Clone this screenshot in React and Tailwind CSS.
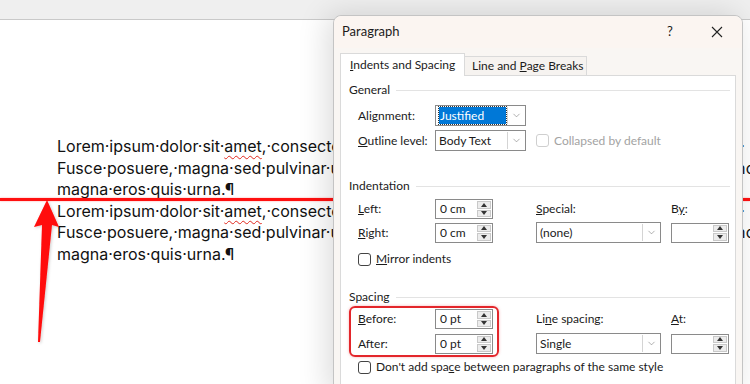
import { ChevronDown } from 'lucide-react'

const UI = "font-['Lato',sans-serif] text-[12px] text-[#1b1b1b] whitespace-nowrap"

const L1 = (
  <>
    Lorem·ipsum·dolor·sit·<span className="underline decoration-wavy decoration-[#e0261b] decoration-1 underline-offset-[3px]">amet</span>,·consectetur·adipiscing·elit.·Maecenas·porttitor·congue·massa.·
  </>
)
const L2 = 'Fusce·posuere,·magna·sed·pulvinar·ultricies,·purus·lectus·malesuada·libero,·sit·amet·commodo·'

function Spin() {
  return (
    <div className="flex flex-col w-[15px] h-full py-px pr-px gap-px">
      <div className="flex-1 flex items-center justify-center bg-[#ececec] border border-[#c9c9c9]">
        <div className="w-0 h-0 border-l-[3px] border-r-[3px] border-b-[4px] border-l-transparent border-r-transparent border-b-[#333]" />
      </div>
      <div className="flex-1 flex items-center justify-center bg-[#ececec] border border-[#c9c9c9]">
        <div className="w-0 h-0 border-l-[3px] border-r-[3px] border-t-[4px] border-l-transparent border-r-transparent border-t-[#333]" />
      </div>
    </div>
  )
}

function SpinBox({ value, w = 'w-[58px]' }) {
  return (
    <div className={`${w} h-[20px] flex items-center border border-[#8a8a8a] bg-white`}>
      <span className="flex-1 pl-[4px] leading-none">{value}</span>
      <Spin />
    </div>
  )
}

function Select({ children, w }) {
  return (
    <div className={`${w} h-[21px] flex items-stretch border border-[#8a8a8a] bg-white`}>
      <div className="flex-1 flex items-center pl-[3px] pr-px">{children}</div>
      <div className="w-[17px] flex items-center justify-center border-l border-[#d4d4d4] my-px mr-px">
        <ChevronDown size={11} strokeWidth={1.2} className="text-[#707070]" />
      </div>
    </div>
  )
}

function Section({ title }) {
  return (
    <div className="h-[16px] flex items-center gap-[6px] pr-[5px]">
      <span>{title}</span>
      <div className="flex-1 h-px bg-[#e3e3e3]" />
    </div>
  )
}

function Check({ light, children }) {
  return (
    <div className="flex items-center gap-[5px]">
      <div className={`w-[13px] h-[13px] rounded-[3px] border bg-white ${light ? 'border-[#cfcfcf]' : 'border-[#444]'}`} />
      <span className={light ? 'text-[#a3a3a3]' : ''}>{children}</span>
    </div>
  )
}

export default function App() {
  return (
    <div className="relative w-[750px] h-[384px] overflow-hidden bg-white">
      {/* ribbon strip */}
      <div className="h-[20px] bg-[#efefef] border-b border-[#c9c9c9]" />

      {/* document page */}
      <div className="pl-[57px] pt-[116px] font-['Inter',sans-serif] text-[16px] leading-[21.6px] text-[#111] whitespace-nowrap">
        <div>{L1}</div>
        <div>{L2}</div>
        <div>magna·eros·quis·urna.¶</div>
        <div>{L1}</div>
        <div>{L2}</div>
        <div>magna·eros·quis·urna.¶</div>
      </div>

      {/* red annotation line */}
      <div className="absolute left-0 top-[198px] w-[750px] h-[3px] bg-[#ff1010] shadow-[0_0_2px_rgba(255,0,0,0.4)]" />

      {/* red arrow */}
      <svg className="absolute left-0 top-0" width="80" height="384" viewBox="0 0 80 384">
        <defs>
          <filter id="sh" x="-50%" y="-10%" width="200%" height="120%">
            <feDropShadow dx="1" dy="1" stdDeviation="1.5" floodColor="#000" floodOpacity="0.2" />
          </filter>
        </defs>
        <polygon
          points="47,200 59,227 52,225 40,342 38,342 42,225 34,227"
          fill="#ff0a0a"
          filter="url(#sh)"
        />
      </svg>

      {/* Paragraph dialog */}
      <div className={`absolute left-[333px] top-[15px] w-[410px] h-[380px] rounded-t-[8px] border border-[#c4c4c4] bg-[#f9f6f3] shadow-[-6px_0_30px_rgba(0,0,0,0.14)] ${UI}`}>
        <div className="h-[32px] flex items-center pl-[8px] pr-[16px] bg-[#fbf5f1] rounded-t-[8px]">
          <span className="flex-1 text-[13px]">Paragraph</span>
          <span className="w-[14px] text-[13px] mr-[30px]">?</span>
          <svg width="12" height="12" viewBox="0 0 12 12" className="mr-[3px]">
            <path d="M1 1L11 11M11 1L1 11" stroke="#222" strokeWidth="1.1" />
          </svg>
        </div>

        <div className="mt-[5px] pl-[6px]">
          {/* tabs */}
          <div className="flex items-end h-[23px]">
            <div className="relative z-10 w-[125px] h-[23px] pl-[9px] flex items-center bg-white border border-b-0 border-[#dadada]">
              <span><u>I</u>ndents and Spacing</span>
            </div>
            <div className="w-[122px] h-[20px] pl-[7px] flex items-center border border-l-0 border-[#dadada] bg-[#f6f3f0]">
              <span>Line and <u>P</u>age Breaks</span>
            </div>
          </div>

          {/* panel */}
          <div className="-mt-px w-[396px] h-[330px] bg-white border border-[#dadada] pl-[8px] pt-[6px]">
            <Section title="General" />

            <div className="mt-[7px] ml-[9px] flex items-center h-[21px]">
              <span className="w-[77px]">Ali<u>g</u>nment:</span>
              <Select w="w-[91px]">
                <span className="h-[17px] px-px flex items-center bg-[#0078d7] text-white outline-1 outline-dotted outline-[#333] w-full">Justified</span>
              </Select>
            </div>

            <div className="mt-[4px] ml-[9px] flex items-center h-[21px]">
              <span className="w-[77px]"><u>O</u>utline level:</span>
              <Select w="w-[91px]">Body Text</Select>
              <div className="ml-[10px]">
                <Check light>Collapsed by default</Check>
              </div>
            </div>

            <div className="mt-[27px]">
              <Section title="Indentation" />
            </div>

            <div className="mt-[5px] ml-[9px] flex items-center h-[20px]">
              <span className="w-[77px]"><u>L</u>eft:</span>
              <SpinBox value="0 cm" />
              <span className="ml-[43px] w-[135px]"><u>S</u>pecial:</span>
              <span>B<u>y</u>:</span>
            </div>

            <div className="mt-[3px] ml-[9px] flex items-center h-[21px]">
              <span className="w-[77px]"><u>R</u>ight:</span>
              <SpinBox value="0 cm" />
              <div className="ml-[43px] w-[135px]">
                <Select w="w-[125px]">(none)</Select>
              </div>
              <SpinBox value="" />
            </div>

            <div className="mt-[8px] ml-[9px] h-[16px] flex items-center">
              <Check><u>M</u>irror indents</Check>
            </div>

            <div className="mt-[22px]">
              <Section title="Spacing" />
            </div>

            <div className="mt-[4px] ml-[9px] flex items-center h-[20px]">
              <span className="w-[77px]"><u>B</u>efore:</span>
              <SpinBox value="0 pt" />
              <span className="ml-[43px] w-[135px]">Li<u>n</u>e spacing:</span>
              <span><u>A</u>t:</span>
            </div>

            <div className="mt-[4px] ml-[9px] flex items-center h-[21px]">
              <span className="w-[77px]">Af<u>t</u>er:</span>
              <SpinBox value="0 pt" />
              <div className="ml-[43px] w-[135px]">
                <Select w="w-[125px]">Single</Select>
              </div>
              <SpinBox value="" />
            </div>

            <div className="mt-[5px] ml-[9px] h-[16px] flex items-center">
              <Check>Don't add spa<u>c</u>e between paragraphs of the same style</Check>
            </div>
          </div>
        </div>

        {/* red highlight box */}
        <div className="absolute left-[15px] top-[290px] w-[150px] h-[51px] rounded-[6px] border-2 border-[#e3262b] shadow-[0_0_3px_rgba(227,38,43,0.35)]" />
      </div>
    </div>
  )
}
